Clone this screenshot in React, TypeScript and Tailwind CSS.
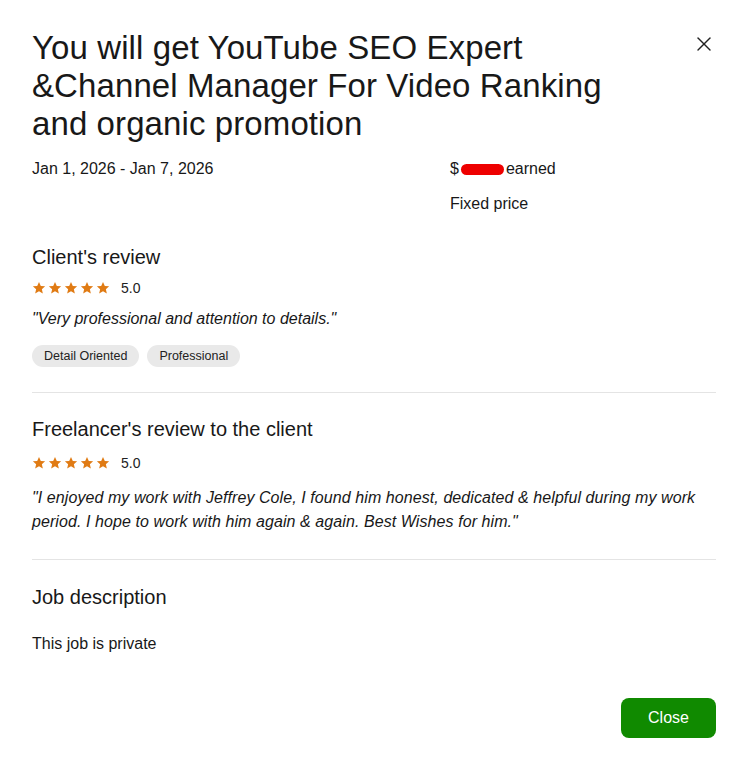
import { X } from "lucide-react";

const font = { fontFamily: '"Liberation Sans", Arial, sans-serif' };

function Stars() {
  return (
    <div className="flex items-center gap-[2px]">
      {[0, 1, 2, 3, 4].map((i) => (
        <svg key={i} width="14" height="14" viewBox="0 0 24 24">
          <path
            d="M12 1.5l3.1 6.9 7.4.7-5.6 5 1.7 7.4L12 17.6l-6.6 3.9 1.7-7.4-5.6-5 7.4-.7z"
            fill="#e07b14"
          />
        </svg>
      ))}
    </div>
  );
}

function Rating() {
  return (
    <div className="flex h-5 items-center gap-[11px]">
      <Stars />
      <span className="text-[14px] text-[#222]">5.0</span>
    </div>
  );
}

export default function App() {
  return (
    <div
      className="min-h-[769px] w-full bg-white pl-8 pr-[26px] pt-[29px] pb-8 text-[#181818]"
      style={font}
    >
      <div className="flex items-start justify-between">
        <h1 className="max-w-[585px] text-[33px] leading-[38px] tracking-[0.003em]">
          You will get YouTube SEO Expert &amp;Channel Manager For Video Ranking and organic promotion
        </h1>
        <button className="mt-[3px] text-[#222]">
          <X size={24} strokeWidth={1.4} />
        </button>
      </div>

      <div className="mt-[15px] grid grid-cols-[418px_1fr] text-[16px] leading-[22px]">
        <div>Jan 1, 2026 - Jan 7, 2026</div>
        <div>
          <div className="flex items-center">
            $<span className="mx-[2px] inline-block h-[11px] w-[43px] rounded-full bg-[#ee0000]" /> earned
          </div>
          <div className="mt-[13px]">Fixed price</div>
        </div>
      </div>

      <section className="mt-[29px]">
        <h2 className="text-[20px] leading-[26px]">Client's review</h2>
        <div className="mt-2">
          <Rating />
        </div>
        <p className="mt-[10px] text-[16px] leading-[22px] italic">
          "Very professional and attention to details."
        </p>
        <div className="mt-[15px] flex gap-2">
          {["Detail Oriented", "Professional"].map((t) => (
            <span
              key={t}
              className="flex h-[22px] items-center rounded-full bg-[#e9e9e9] px-3 text-[12.5px] text-[#222]"
            >
              {t}
            </span>
          ))}
        </div>
      </section>

      <div className="mt-[25px] border-t border-[#e4e4e4]" />

      <section className="mt-[23px]">
        <h2 className="text-[20px] leading-[26px]">Freelancer's review to the client</h2>
        <div className="mt-[11px]">
          <Rating />
        </div>
        <p className="mt-[13px] text-[16px] leading-[24px] tracking-[0.005em] italic">
          "I enjoyed my work with Jeffrey Cole, I found him honest, dedicated &amp; helpful during my work period. I hope to work with him again &amp; again. Best Wishes for him."
        </p>
      </section>

      <div className="mt-[25px] border-t border-[#e4e4e4]" />

      <section className="mt-[24px]">
        <h2 className="text-[20px] leading-[26px]">Job description</h2>
        <p className="mt-[23px] text-[16px] leading-[22px]">This job is private</p>
      </section>

      <div className="mt-[43px] flex justify-end">
        <button className="h-10 w-[95px] rounded-lg bg-[#108a00] text-[16px] font-medium text-white">
          Close
        </button>
      </div>
    </div>
  );
}
